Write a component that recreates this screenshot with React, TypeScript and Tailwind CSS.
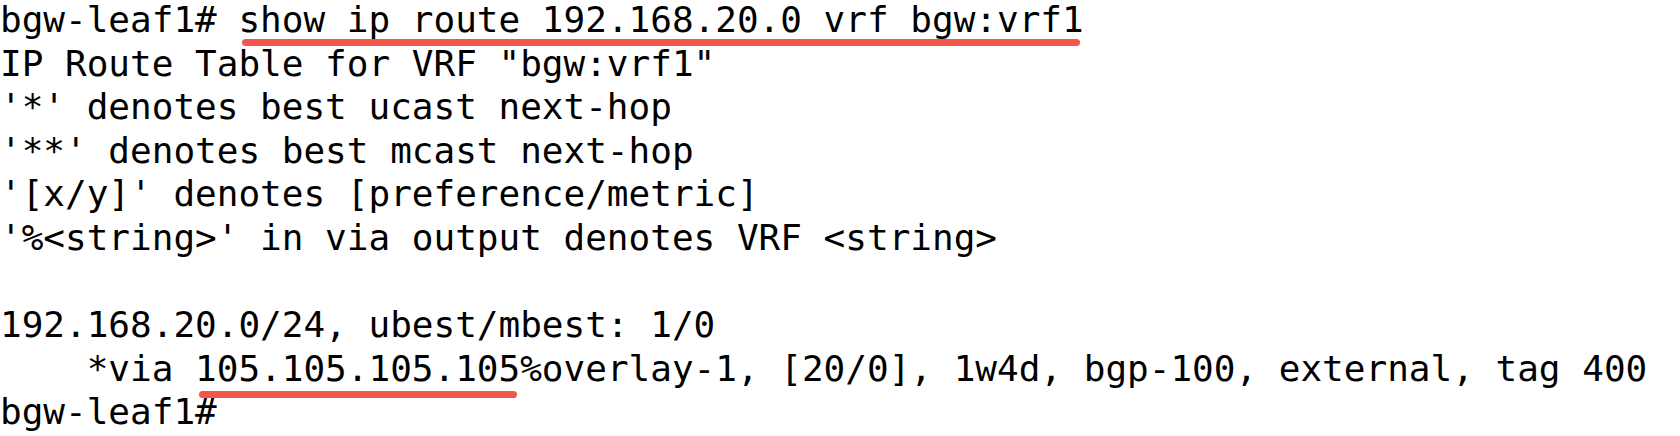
import React from "react";

// 终端输出截图：show ip route
const Mark = ({ children }: { children: React.ReactNode }) => (
  <span className="relative">
    {children}
    <span className="absolute left-[4px] right-[4px] top-[calc(100%-1px)] h-[7px] rounded-full bg-[#f2574c]" />
  </span>
);

const App = () => {
  return (
    <div className="w-[1680px] h-[436px] overflow-hidden bg-white">
      <pre
        className="m-0 -mt-[2px] whitespace-pre text-[36px] leading-[43.6px] text-black"
        style={{ fontFamily: '"DejaVu Sans Mono", "Liberation Mono", monospace' }}
      >
        <div>
          bgw-leaf1# <Mark>show ip route 192.168.20.0 vrf bgw:vrf1</Mark>
        </div>
        <div>IP Route Table for VRF "bgw:vrf1"</div>
        <div>'*' denotes best ucast next-hop</div>
        <div>'**' denotes best mcast next-hop</div>
        <div>'[x/y]' denotes [preference/metric]</div>
        <div>'%&lt;string&gt;' in via output denotes VRF &lt;string&gt;</div>
        <div> </div>
        <div>192.168.20.0/24, ubest/mbest: 1/0</div>
        <div>
          {"    *via "}
          <span className="relative">
            105.105.105.105
            <span className="absolute left-[4px] right-[3px] top-[calc(100%+2px)] h-[7px] rounded-full bg-[#f2574c]" />
          </span>
          %overlay-1, [20/0], 1w4d, bgp-100, external, tag 400
        </div>
        <div>bgw-leaf1#</div>
      </pre>
    </div>
  );
};

export default App;
